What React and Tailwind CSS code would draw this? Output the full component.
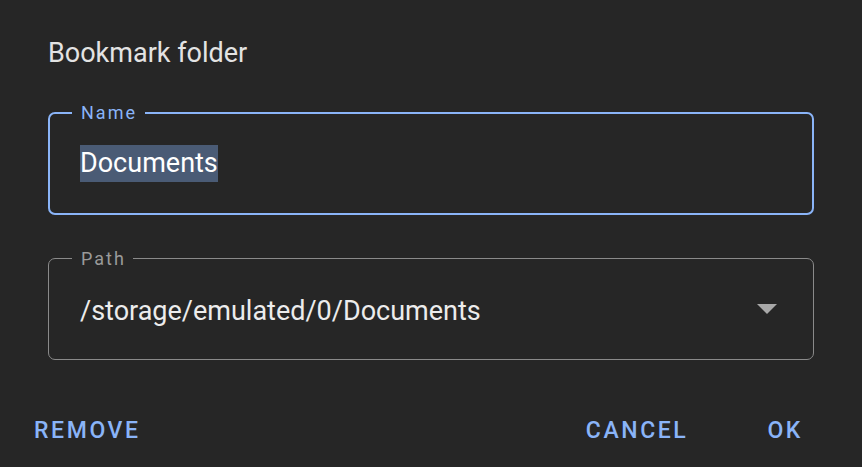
export default function App() {
  return (
    <div
      className="w-[862px] h-[467px] bg-[#262626] relative overflow-hidden"
      style={{ fontFamily: "Roboto, 'Noto Sans', sans-serif" }}
    >
      <div className="pt-[37px] pl-[48px] text-[27px] leading-[32px] text-[#e3e3e3]">
        Bookmark folder
      </div>

      <div className="mx-[48px] mt-[43px] relative h-[103px] rounded-[7px] border-2 border-[#8ab4f8] flex items-center">
        <span className="absolute -top-[12px] left-[22px] pl-[9px] pr-[8px] bg-[#262626] text-[18px] leading-[22px] tracking-[2px] text-[#8ab4f8]">
          Name
        </span>
        <span className="ml-[30px] text-[27px] leading-[37px] text-white bg-[#4a5b75]">
          Documents
        </span>
      </div>

      <div className="mx-[48px] mt-[43px] relative h-[102px] rounded-[7px] border border-[#8a8a8a] flex items-center">
        <span className="absolute -top-[11px] left-[23px] pl-[9px] pr-[7px] bg-[#262626] text-[18px] leading-[22px] tracking-[2px] text-[#9a9a9a]">
          Path
        </span>
        <span className="ml-[31px] mt-[4px] text-[27px] leading-[32px] text-[#ececec]">
          /storage/emulated/0/Documents
        </span>
        <svg className="absolute left-[708px] top-[45px]" width="20" height="11" viewBox="0 0 20 11">
          <polygon points="0,0 20,0 10,10" fill="#a8a8a8" />
        </svg>
      </div>

      <div className="mt-[57px] flex items-center text-[23px] leading-[28px] font-medium tracking-[2.6px] text-[#8ab4f8]">
        <span className="ml-[34px]">REMOVE</span>
        <span className="ml-auto">CANCEL</span>
        <span className="ml-[79px] mr-[59px]">OK</span>
      </div>
    </div>
  );
}
